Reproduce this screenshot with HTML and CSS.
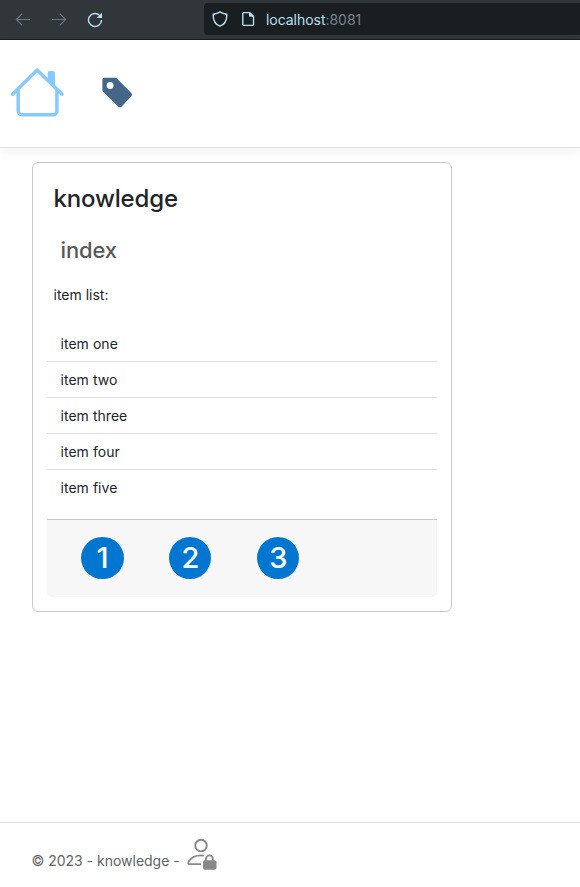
FILE: index.html
```html
<!DOCTYPE html>
<html lang="en">
<head>
<meta charset="utf-8">
<title>knowledge</title>
<link rel="stylesheet" href="styles.css">
</head>
<body>
<div class="browser">
  <div class="controls">
    <svg width="16" height="16" viewBox="0 0 16 16" class="arrow"><path d="M15 7.5H1.5M7.2 1.7L1.4 7.5l5.8 5.8"/></svg>
    <svg width="16" height="16" viewBox="0 0 16 16" class="arrow"><path d="M1 7.5h13.5M8.8 1.7L14.6 7.5l-5.8 5.8"/></svg>
    <svg width="16" height="16" viewBox="0 0 16 16" class="reload"><path d="M12.8 3.6A6.5 6.5 0 1 0 14.5 8" /><path class="solid" d="M15 .8V6H9.6z"/></svg>
  </div>
  <div class="address">
    <svg width="16" height="16" viewBox="0 0 16 16" class="line"><path d="M8 .8C6 2.1 3.7 2.8 1.2 3.3C1 8.7 3 13.3 8 15.2C13 13.3 15 8.7 14.8 3.3C12.3 2.8 10 2.1 8 .8z"/></svg>
    <svg width="14" height="16" viewBox="0 0 14 16" class="line"><path d="M2.8 1.6h5.9l3.8 3.8v8a1 1 0 0 1-1 1H2.8a1 1 0 0 1-1-1V2.6a1 1 0 0 1 1-1z"/><path class="solid" d="M8 1.5l4.8 4.2H9a1 1 0 0 1-1-1z"/></svg>
    <span class="url">localhost<span>:8081</span></span>
  </div>
</div>
<header class="navbar">
  <svg class="home" width="54" height="50" viewBox="0 0 54 50"><path d="M2.6 27.3L27.2 3 52 27.3M8.2 23V44a3.7 3.7 0 0 0 3.7 3.7H43.2A3.7 3.7 0 0 0 46.9 44V23"/><path class="chimney" d="M37.7 12V6a2 2 0 0 1 2-2h3.3a2 2 0 0 1 2 2V20z"/></svg>
  <svg class="tag" width="30" height="31" viewBox="0 0 30 31"><path fill-rule="evenodd" d="M2 .8H13.2a2.4 2.4 0 0 1 1.7.7L29.3 16.1a2.2 2.2 0 0 1 0 3.1L19.5 29.8a2.2 2.2 0 0 1-3.1 0L1.1 14.7a2.4 2.4 0 0 1-.7-1.7V2.5A1.7 1.7 0 0 1 2 .8zM8.1 5.1a3.4 3.4 0 1 0 0 6.8 3.4 3.4 0 0 0 0-6.8z"/></svg>
</header>
<main>
  <section class="card">
    <h1>knowledge</h1>
    <h2>index</h2>
    <p>item list:</p>
    <ul>
      <li>item one</li>
      <li>item two</li>
      <li>item three</li>
      <li>item four</li>
      <li>item five</li>
    </ul>
    <div class="pages">
      <span>1</span><span>2</span><span>3</span>
    </div>
  </section>
</main>
<footer>
  <span>© 2023 - knowledge -</span>
  <svg class="user" width="30" height="32" viewBox="0 0 30 32"><circle cx="14" cy="7.6" r="5.8"/><path d="M13.5 26.1H2.1C.9 26.1 1.4 24.1 2 23.1 4.3 19.4 8.6 17.4 14 17.4q1.2 0 2 .2"/><path d="M19 23v-2.2a3.4 3.4 0 0 1 6.8 0V23"/><rect x="16" y="22.2" width="13.5" height="9.5" rx="2"/></svg>
</footer>
</body>
</html>
```
FILE: styles.css
```css
* { box-sizing: border-box; }
body {
  margin: 0;
  height: 887px;
  display: flex;
  flex-direction: column;
  overflow: hidden;
  background: #fff;
  color: #212529;
  font: 14px/21px Inter, sans-serif;
}
svg { display: block; flex: none; fill: none; }
.browser {
  display: flex;
  flex: none;
  height: 40px;
  background: #31363b;
  border-bottom: 1px solid #1b1e20;
}
.controls { display: flex; gap: 20px; width: 204px; padding: 12px 0 0 15px; }
.arrow { stroke: #657882; stroke-width: 1.2; }
.reload, .line { stroke: #b5e0f6; stroke-width: 1.4; }
.solid { fill: #b5e0f6; stroke: none; }
.address {
  display: flex;
  align-items: center;
  flex: 1;
  height: 32px;
  margin-top: 3px;
  padding-left: 8px;
  gap: 13px;
  background: #1a1e21;
  border-radius: 4px 0 0 4px;
}
.url { margin-left: -2px; color: #b5e0f6; letter-spacing: -.04px; }
.url span { color: #71858e; }
.navbar {
  position: relative;
  display: flex;
  flex: none;
  height: 108px;
  padding: 27px 0 0 10px;
  gap: 38px;
  border-bottom: 1px solid #dee2e6;
  box-shadow: 0 3.5px 10.5px rgba(0, 0, 0, .05);
}
.home { stroke: #86caff; stroke-width: 3.5; stroke-linecap: round; stroke-linejoin: round; }
.chimney { fill: #86caff; stroke: none; }
.tag { margin-top: 10px; fill: #446688; }
main { flex: 1; padding: 14px 32px; }
.card {
  width: 420px;
  height: 450px;
  padding: 14px;
  border: 1px solid #c8c9ca;
  border-radius: 6px;
}
h1, h2 { margin: 0; font-weight: 500; }
h1 { padding: 7px 0 0 6.5px; font-size: 24px; line-height: 29px; letter-spacing: -.16px; }
h2 { padding: 24px 0 0 13.5px; font-size: 22px; line-height: 27px; letter-spacing: -.12px; color: #59595a; }
p { margin: 0; padding: 20px 0 0 6.5px; }
ul { list-style: none; margin: 21px 0 0; padding: 0; }
li { height: 36px; padding: 7px 13.5px; border-bottom: 1px solid #dfdfdf; letter-spacing: .04px; }
li:last-child { border-bottom: 0; }
.pages {
  display: flex;
  gap: 45.7px;
  height: 78px;
  margin-top: 13px;
  padding: 17px 0 0 34.4px;
  background: #f7f7f7;
  border-top: 1px solid #c8c8c8;
  border-radius: 0 0 5px 5px;
}
.pages span {
  width: 42.2px;
  height: 42px;
  border-radius: 50%;
  background: #0076d1;
  color: #fff;
  text-align: center;
  font-size: 29px;
  line-height: 42px;
  font-weight: 500;
}
footer {
  display: flex;
  flex: none;
  height: 65px;
  padding: 15px 0 0 31.5px;
  gap: 7px;
  border-top: 1px solid #dee2e6;
  color: #5e6368;
}
footer span { padding-top: 12px; letter-spacing: -.01px; }
.user { stroke: #888; stroke-width: 1.9; stroke-linecap: round; }
.user rect { fill: #888; stroke: none; }
```
